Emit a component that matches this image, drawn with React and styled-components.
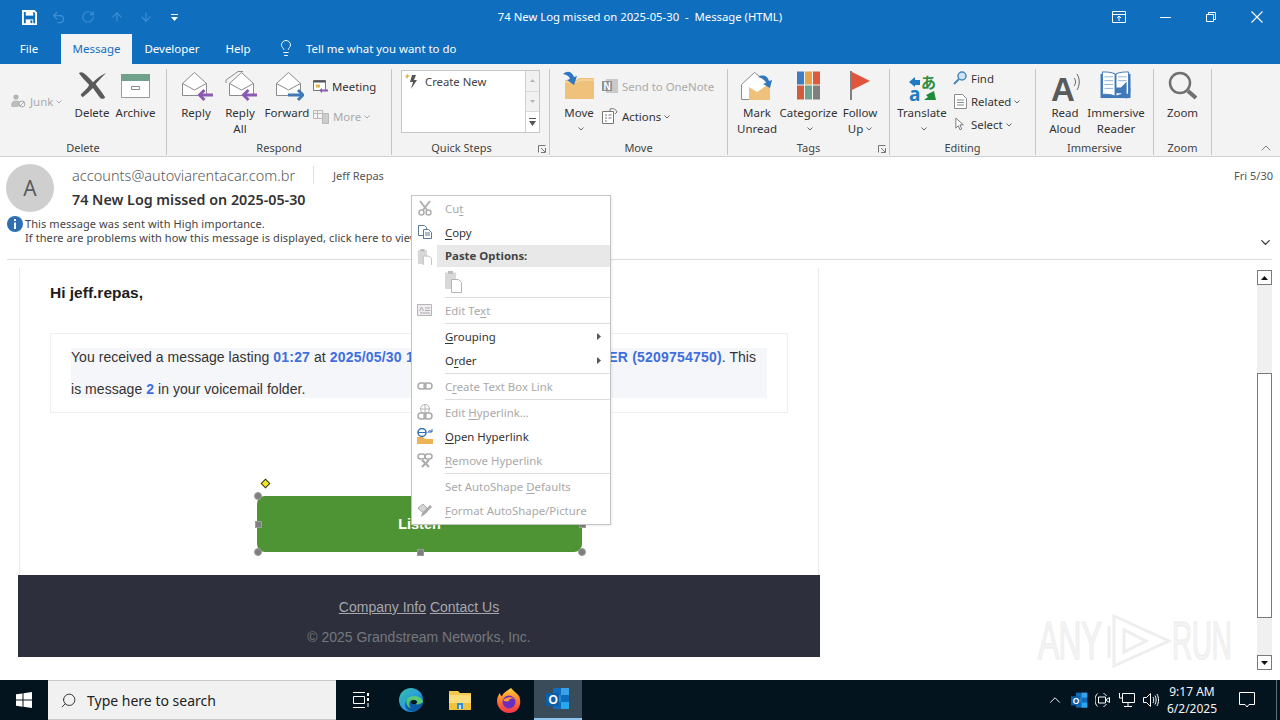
import React from 'react';
import styled, { createGlobalStyle } from 'styled-components';
import { Search, Undo2, RotateCw, ArrowUp, ArrowDown, Lightbulb, ChevronUp, ChevronDown } from 'lucide-react';

const UI_FONT = '"Noto Sans", "Open Sans", sans-serif';
const MAIL_FONT = '"Liberation Sans", Arial, sans-serif';

const GlobalStyle = createGlobalStyle`
  html, body { margin: 0; padding: 0; background: #fff; overflow: hidden; }
  * { box-sizing: border-box; }
`;

// --------------------- Window chrome ----------------------------------

const Page = styled.div`
  position: relative;
  width: 1280px;
  height: 720px;
  display: flex;
  flex-direction: column;
  overflow: hidden;
  font-family: ${UI_FONT};
  font-size: 12px;
  color: #333;
  background: #fff;
`;

const TitleBar = styled.div`
  height: 34px;
  flex: none;
  display: grid;
  grid-template-columns: 1fr auto 1fr;
  align-items: center;
  background: #106ebe;
  color: #fff;
`;

const Qat = styled.div`
  display: flex;
  align-items: center;
  padding-left: 15px;
`;

const QatSlot = styled.div`
  width: 29px;
  height: 20px;
  display: flex;
  align-items: center;
  justify-content: center;
  color: ${(p) => (p.$dim ? '#3f8ed2' : '#fff')};
`;

const WindowTitle = styled.div`
  font-size: 11.3px;
  line-height: 16px;
  color: #fff;
  white-space: pre;
`;

const WindowButtons = styled.div`
  justify-self: end;
  display: flex;
  align-items: center;
`;

const WindowButton = styled.div`
  width: 46px;
  height: 30px;
  display: flex;
  align-items: center;
  justify-content: center;
`;

const TabBar = styled.div`
  height: 30px;
  flex: none;
  display: flex;
  align-items: flex-end;
  background: #106ebe;
`;

const Tab = styled.div`
  width: ${(p) => p.$w}px;
  height: 30px;
  display: flex;
  align-items: center;
  justify-content: center;
  padding: 0 ${(p) => p.$pr || 0}px 2px 0;
  font-size: 11.5px;
  color: ${(p) => (p.$active ? '#106ebe' : '#fff')};
  background: ${(p) => (p.$active ? '#f3f3f3' : 'transparent')};
`;

const TellMe = styled.div`
  display: flex;
  align-items: center;
  gap: 11px;
  height: 30px;
  padding: 0 0 2px 13px;
  font-size: 11.4px;
  color: #fff;
`;

// --------------------- Ribbon -----------------------------------------

const Ribbon = styled.div`
  position: relative;
  height: 93px;
  flex: none;
  display: flex;
  background: #f3f3f3;
  border-bottom: 1px solid #d2d2d2;
`;

const Group = styled.div`
  width: ${(p) => p.$w}px;
  flex: none;
  height: 92px;
  display: flex;
  flex-direction: column;
  position: relative;
`;

const GroupDivider = styled.div`
  width: 1px;
  flex: none;
  margin: 5px 0 1px;
  background: #c6c6c6;
`;

const GroupBody = styled.div`
  height: 76px;
  display: flex;
  padding-left: ${(p) => p.$pad || 0}px;
`;

const GroupLabel = styled.div`
  height: 16px;
  line-height: 16px;
  text-align: center;
  font-size: 11px;
  color: #444;
  padding-right: ${(p) => p.$pr || 0}px;
`;

const Launcher = styled.svg`
  position: absolute;
  right: 3px;
  bottom: 3px;
`;

const LargeButton = styled.div`
  width: ${(p) => p.$w}px;
  flex: none;
  display: flex;
  flex-direction: column;
  align-items: center;
  text-align: center;
  color: #333;
`;

const LargeIcon = styled.div`
  height: 41px;
  padding-top: 7px;
  display: flex;
  justify-content: center;
`;

const LargeText = styled.div`
  font-size: 11.5px;
  line-height: 15.5px;
  white-space: pre-line;
`;

const SmallColumn = styled.div`
  display: flex;
  flex-direction: column;
  flex: none;
  width: ${(p) => p.$w}px;
  padding-top: ${(p) => p.$top}px;
  padding-left: ${(p) => p.$left || 0}px;
  gap: ${(p) => p.$gap}px;
`;

const SmallButton = styled.div`
  display: flex;
  align-items: center;
  height: 18px;
  gap: 4px;
  font-size: 11.4px;
  white-space: nowrap;
  color: ${(p) => (p.$off ? '#aaaaaa' : '#333')};
`;

const IconSlot = styled.span`
  width: 14px;
  display: flex;
  justify-content: center;
  flex: none;
`;

const CaretIcon = styled.svg`
  margin-left: 3px;
  vertical-align: middle;
`;

const Gallery = styled.div`
  width: 139px;
  height: 63px;
  margin: 6px 0 0 9px;
  display: flex;
  background: #fff;
  border: 1px solid #c6c6c6;
`;

const GalleryList = styled.div`
  flex: 1;
  display: flex;
  align-items: flex-start;
  gap: 2px;
  padding: 2px 0 0 3px;
  font-size: 11.3px;
  line-height: 17px;
  color: #444;
`;

const GalleryArrows = styled.div`
  width: 14px;
  display: flex;
  flex-direction: column;
  border-left: 1px solid #d0d0d0;
`;

const GalleryArrow = styled.div`
  flex: 1;
  display: flex;
  align-items: center;
  justify-content: center;
  background: ${(p) => (p.$on ? '#fff' : '#f1f1f1')};
  border-bottom: 1px solid #dadada;
  &:last-child { border-bottom: 0; }
`;

const Collapse = styled.div`
  position: absolute;
  right: 6px;
  bottom: 0;
  color: #444;
  display: flex;
`;

// --------------------- Message header ---------------------------------

const Header = styled.div`
  height: 103px;
  flex: none;
  margin: 0 8px 0 7px;
  border-bottom: 1px solid #dcdcdc;
  display: flex;
  flex-direction: column;
`;

const HeaderTop = styled.div`
  display: flex;
  height: 60px;
`;

const Avatar = styled.div`
  width: 48px;
  height: 48px;
  margin: 7px 0 0 -1px;
  border-radius: 50%;
  background: #cfcfcf;
  color: #5c5c5c;
  display: flex;
  align-items: center;
  justify-content: center;
  font-size: 21px;
`;

const HeaderText = styled.div`
  flex: 1;
  padding: 7px 0 0 18px;
  min-width: 0;
`;

const SenderRow = styled.div`
  display: flex;
  align-items: center;
  height: 22px;
`;

const Sender = styled.span`
  font-size: 14.5px;
  font-weight: 300;
  letter-spacing: 0.03px;
  color: #5a5a5a;
  width: 242px;
  border-right: 1px solid #e0e0e0;
  line-height: 18px;
`;

const Recipient = styled.span`
  margin: 1px 0 0 19px;
  font-size: 11px;
  color: #555;
`;

const SentDate = styled.span`
  margin: 1px -1px 0 auto;
  font-size: 11px;
  color: #555;
`;

const Subject = styled.div`
  margin-top: 4px;
  font-size: 14.3px;
  line-height: 20px;
  font-weight: 600;
  color: #333;
`;

const InfoRow = styled.div`
  display: flex;
  gap: 2px;
  font-size: 11px;
  letter-spacing: 0.09px;
  line-height: 14px;
  color: #444;
  white-space: nowrap;
`;

const InfoGlyph = styled.svg`
  flex: none;
  margin-top: -1px;
`;

const ExpandChevron = styled.div`
  margin: 18px -1px 0 auto;
  display: flex;
  color: #333;
`;

// --------------------- Mail body --------------------------------------

const Body = styled.div`
  flex: 1;
  display: flex;
  min-height: 0;
`;

const MailPane = styled.div`
  flex: 1;
  padding: 8px 0 0 18px;
`;

const MailColumn = styled.div`
  width: 802px;
  font-family: ${MAIL_FONT};
`;

const Sheet = styled.div`
  height: 307px;
  margin: 0 1px;
  padding: 15px 30px;
  border-left: 1px solid #e9e9e9;
  border-right: 1px solid #e9e9e9;
`;

const Greeting = styled.div`
  font-size: 15.5px;
  line-height: 20px;
  font-weight: 700;
  color: #1c1c1c;
`;

const NoticeBox = styled.div`
  width: 738px;
  height: 80px;
  margin-top: 30px;
  padding: 14px 20px;
  border: 1px solid #efefef;
`;

const NoticeShade = styled.div`
  display: flow-root;
  height: 50px;
  background: #f5f6fa;
`;

const NoticeText = styled.div`
  margin-top: -7px;
  font-size: 14px;
  line-height: 32px;
  letter-spacing: 0.04px;
  color: #333;
`;

const Strong = styled.b`
  color: #3f6fdc;
  font-weight: 700;
  letter-spacing: 0.2px;
`;

const ListenRow = styled.div`
  display: flex;
  margin: 83px 0 0 207px;
`;

const Listen = styled.div`
  position: relative;
  width: 325px;
  height: 56px;
  border-radius: 8px;
  background: #4f9434;
  color: #fff;
  font-size: 14.5px;
  font-weight: 700;
  display: flex;
  align-items: center;
  justify-content: center;
`;

const Handle = styled.span`
  position: absolute;
  left: ${(p) => p.$x}px;
  top: ${(p) => p.$y}px;
  width: ${(p) => (p.$round ? 8 : 7)}px;
  height: ${(p) => (p.$round ? 8 : 7)}px;
  margin: ${(p) => (p.$round ? -4 : -3.5)}px;
  border-radius: ${(p) => (p.$round ? '50%' : '0')};
  background: #7f7f7f;
  border: 1px solid #9b9b9b;
`;

const Diamond = styled.span`
  position: absolute;
  left: 5px;
  top: -16px;
  width: 7px;
  height: 7px;
  transform: rotate(45deg);
  background: #f3ea1c;
  border: 1px solid #333;
`;

const MailFooter = styled.div`
  height: 82px;
  background: #2d303c;
  text-align: center;
  font-size: 14px;
  line-height: 20px;
  padding-top: 22px;
  color: #75777f;
`;

const FooterLinks = styled.div`
  margin-bottom: 10px;
  color: #a5a7ad;
  & > span { text-decoration: underline; }
`;

const ScrollTrack = styled.div`
  width: 15px;
  margin: 10px 8px 10px 0;
  flex: none;
  display: flex;
  flex-direction: column;
  background: #f0f0f0;
`;

const ScrollButton = styled.div`
  height: 15px;
  flex: none;
  background: #fff;
  border: 1px solid #7a7a7a;
  display: flex;
  align-items: center;
  justify-content: center;
`;

const ScrollThumb = styled.div`
  height: 245px;
  margin-top: 88px;
  margin-bottom: auto;
  background: #fff;
  border: 1px solid #7a7a7a;
`;

// --------------------- Context menu -----------------------------------

const Menu = styled.div`
  position: absolute;
  left: 411px;
  top: 195px;
  width: 200px;
  background: #fff;
  border: 1px solid #c4c4c4;
  padding-bottom: 2px;
  box-shadow: 1px 1px 2px rgba(0, 0, 0, 0.08);
  font-size: 11.4px;
`;

const MenuItem = styled.div`
  height: 24px;
  display: flex;
  align-items: center;
  color: ${(p) => (p.$off ? '#a9a9a9' : '#333')};
  u { text-underline-offset: 2px; }
`;

const MenuGlyph = styled.div`
  width: 25px;
  height: 24px;
  flex: none;
  display: flex;
  align-items: center;
  justify-content: center;
`;

const MenuLabel = styled.div`
  padding-left: 8px;
  white-space: pre;
`;

const MenuHeading = styled.div`
  flex: 1;
  height: 22px;
  line-height: 22px;
  padding-left: 8px;
  background: #e8e8e8;
  font-weight: 700;
  color: #444;
`;

const PasteRow = styled.div`
  height: 28px;
  display: flex;
  align-items: center;
  padding-left: 32px;
`;

const MenuRule = styled.div`
  height: 2px;
  margin-left: 33px;
  border-bottom: 1px solid #dcdcdc;
`;

const Submenu = styled.svg`
  margin: 0 9px 0 auto;
`;

// --------------------- Taskbar ----------------------------------------

const Taskbar = styled.div`
  height: 40px;
  flex: none;
  display: flex;
  align-items: center;
  background: #04141f;
  color: #fff;
`;

const StartSlot = styled.div`
  width: 48px;
  height: 40px;
  display: flex;
  align-items: center;
  justify-content: center;
`;

const SearchBox = styled.div`
  width: 288px;
  height: 40px;
  display: flex;
  align-items: center;
  gap: 10px;
  padding-left: 12px;
  background: #f1f1f1;
  border: 1px solid #c9c9c9;
  border-width: 1px 0;
  color: #222;
  font-size: 14px;
`;

const SearchGlyph = styled(Search)`
  transform: scaleX(-1);
`;

const TaskApps = styled.div`
  display: flex;
`;

const TaskApp = styled.div`
  width: ${(p) => p.$w}px;
  height: 40px;
  display: flex;
  align-items: center;
  justify-content: center;
  background: ${(p) => (p.$active ? '#3a4b59' : 'transparent')};
  border-bottom: ${(p) => (p.$active ? '2px solid #8fc4ee' : '0')};
`;

const Tray = styled.div`
  margin-left: auto;
  display: flex;
  align-items: center;
  height: 40px;
`;

const TrayIcon = styled.div`
  width: 24px;
  height: 40px;
  display: flex;
  align-items: center;
  justify-content: center;
`;

const Clock = styled.div`
  width: 58px;
  text-align: center;
  font-size: 12px;
  line-height: 17.5px;
  color: #f3f3f3;
`;

const Notify = styled.div`
  width: 40px;
  margin: 0 12px 0 3px;
  display: flex;
  justify-content: center;
  padding-left: 6px;
`;

const ShowDesktop = styled.div`
  width: 1px;
  height: 40px;
  background: #5f6b75;
  margin-right: 3px;
`;

// --------------------- Watermark --------------------------------------

const Watermark = styled.div`
  position: absolute;
  left: 1038px;
  top: 606px;
  display: flex;
  align-items: center;
  height: 68px;
  pointer-events: none;
  font-family: ${MAIL_FONT};
  font-size: 53px;
  letter-spacing: -1px;
  color: #f4f4f4;
  -webkit-text-stroke: 1px #ebebeb;
`;

const WatermarkWord = styled.span`
  display: inline-block;
  transform: scaleX(${(p) => p.$sx});
  transform-origin: left center;
  width: ${(p) => p.$w}px;
`;

// --------------------- Icons ------------------------------------------

const Caret = ({ color = '#666' }) => (
  <CaretIcon width="6" height="4" viewBox="0 0 6 4">
    <path d="M.5.5 3 3 5.500.5" fill="none" stroke={color} />
  </CaretIcon>
);

const SaveIcon = () => (
  <svg width="15" height="15" viewBox="0 0 16 16">
    <path d="M1 1h12l2 2v12H1z" fill="none" stroke="#fff" strokeWidth="2" />
    <path d="M4 1h8v5H4z" fill="#fff" />
    <path d="M4 10h8v5H4z" fill="#fff" />
    <path d="M9 11h2v3H9z" fill="#106ebe" />
  </svg>
);

const CustomizeIcon = () => (
  <svg width="7" height="7" viewBox="0 0 7 7">
    <path d="M0 0h7v1H0z M0 3h7L3.500 7z" fill="#fff" />
  </svg>
);

const RibbonDisplayIcon = () => (
  <svg width="14" height="12" viewBox="0 0 14 12" fill="none" stroke="#fff">
    <path d="M.5.5h13v11H.5zM.5 3.500h13" />
    <path d="M7 10V5M5 7l2-2 2 2" />
  </svg>
);

const MinimizeIcon = () => (
  <svg width="11" height="3" viewBox="0 0 11 3">
    <path d="M0 1.500h11" stroke="#fff" />
  </svg>
);

const RestoreIcon = () => (
  <svg width="10" height="10" viewBox="0 0 10 10" fill="none" stroke="#fff">
    <path d="M.5 2.500h7v7h-7zM2.500 2.500v-2h7v7h-2" />
  </svg>
);

const CloseIcon = () => (
  <svg width="12" height="12" viewBox="0 0 12 12" fill="none" stroke="#fff" strokeWidth="1.100">
    <path d="M.5.5l11 11M11.500.5l-11 11" />
  </svg>
);

const JunkIcon = () => (
  <svg width="15" height="14" viewBox="0 0 15 14">
    <circle cx="5" cy="3" r="2.600" fill="#b5b5b5" />
    <path d="M0 12c0-4 2-5.500 5-5.500s4 1 4.500 2L7 13H1z" fill="#bdbdbd" />
    <circle cx="11" cy="10" r="3" fill="#f3f3f3" stroke="#a5a5a5" />
    <path d="m9 12 4-4" stroke="#a5a5a5" />
  </svg>
);

const DeleteIcon = () => (
  <svg width="30" height="30" viewBox="0 0 32 32">
    <path d="M2 2c2-1 3-1 5 0 4 3 8 7 10 10 4-4 8-7 14-10-4 4-9 9-11 12 3 4 7 9 10 14-1 2-3 2-5 1-3-4-6-8-8-11-3 3-7 7-11 10-1-1-2-2-2-3 3-3 7-6 9-10C10 11 5 7 2 2z" fill="#5a5a5a" />
  </svg>
);

const ArchiveIcon = () => (
  <svg width="32" height="27" viewBox="0 -3 32 27">
    <path d="M1.500 5.500h28v18h-28z" fill="#fff" stroke="#9a9a9a" />
    <path d="M1 0h29v7H1z" fill="#70a18c" />
    <path d="M11.500 12.500h8v3h-8z" fill="none" stroke="#888" />
  </svg>
);

const Envelope = ({ dx = 0 }) => (
  <g transform={`translate(${dx} 0)`} fill="#fff" stroke="#8b8b8b">
    <path d="M1.500 12.500 13.500 1.500l12 11v12h-24z" />
    <path d="M1.500 12.500 13.500 19l12-6.500" fill="none" />
  </g>
);

const ReplyIcon = ({ all }) => (
  <svg width="33" height="31" viewBox="0 0 33 31">
    {all && <path d="M2 12V9L14 .5h5" stroke="#8b8b8b" fill="none" />}
    <Envelope dx={all ? 4 : 1} />
    <g fill="none" stroke="#8a5bb2" strokeWidth="3">
      <path d="M33 24H20" />
      <path d="M24.500 19l-5 5 5 5" />
    </g>
  </svg>
);

const ForwardIcon = () => (
  <svg width="33" height="31" viewBox="0 0 33 31">
    <Envelope dx={4} />
    <g fill="none" stroke="#3f79b8" strokeWidth="3">
      <path d="M17 24h14" />
      <path d="M27 19l5 5-5 5" />
    </g>
  </svg>
);

const MeetingIcon = () => (
  <svg width="15" height="14" viewBox="0 0 15 14">
    <path d="M.5 1.500h12v10H.5z" fill="#fff" stroke="#777" />
    <path d="M.5 1.500h12v2H.5z" fill="#555" />
    <path d="M3 5.500h4v3H3z" fill="#e8b23e" />
    <path d="M15 10.500H9V9l-3 2.500L9 14v-1.500h6z" fill="#8a5bb2" />
  </svg>
);

const MoreIcon = () => (
  <svg width="16" height="15" viewBox="0 0 16 15" fill="none" stroke="#b8b8b8">
    <path d="M.5 1.500h9v8h-9zM.5 4.500h9M4.500 1.500v8" />
    <path d="M9.500 4.500h6v10h-6z" fill="#ccc" />
  </svg>
);

const BoltIcon = () => (
  <svg width="18" height="17" viewBox="0 0 18 17">
    <path d="M2 0l1 2 2 1-2 1-1 2-1-2-1-1 2-1z" fill="#e8b23e" />
    <path d="M11 2H7L5 9h3l-2 7 6-9H9z" fill="#555" />
  </svg>
);

const MoveIcon = () => (
  <svg width="32" height="30" viewBox="0 0 32 30">
    <path d="M2 9h11l3-2h15v21H2z" fill="#eec27a" />
    <path d="M2 11h12l3-2h14" fill="none" stroke="#f6dfb3" />
    <path d="M0 3c5-4 9-2 11 3l3-1-3 9-7-5 3-1C6 5 4 4 0 3z" fill="#2f77bf" />
  </svg>
);

const OneNoteIcon = () => (
  <svg width="16" height="16" viewBox="0 0 16 16">
    <path d="M4 1h12v14H4z" fill="#c9c9c9" />
    <path d="M0 3h10v10H0z" fill="#8f8f8f" />
    <text x="1.500" y="11.500" fontSize="10" fontWeight="700" fill="#fff" fontFamily="Liberation Sans">N</text>
  </svg>
);

const ActionsIcon = () => (
  <svg width="16" height="16" viewBox="0 0 16 16" fill="none" stroke="#777">
    <path d="M.5 3.500h11v12H.5z" fill="#fff" />
    <path d="M3 7h2M6.500 7h3M3 10h2M6.500 10h3M3 13h2" />
    <path d="M8 3.500V1c3-1 6 0 7 3l-2 2" />
  </svg>
);

const UnreadIcon = () => (
  <svg width="34" height="30" viewBox="0 0 34 30">
    <path d="M1.500 13.500 14.500 1.500l13 10v17h-26z" fill="#fff" stroke="#8b8b8b" />
    <path d="M9 16l8 5 13-9v17H9z" fill="#eec27a" />
    <path d="M18 6c5-3 10-1 11 4l3-1-2 8-7-4 3-1c-1-4-4-5-8-6z" fill="#2f77bf" />
  </svg>
);

const CategorizeIcon = () => (
  <svg width="24" height="29" viewBox="0 0 24 28">
    <path d="M0 0h7v13H0z" fill="#3f7cc0" />
    <path d="M8 0h7v13H8z" fill="#e8a24b" />
    <path d="M16 0h7v13h-7z" fill="#de5a3d" />
    <path d="M0 14h7v14H0z" fill="#cf5c3f" />
    <path d="M8 14h7v14H8z" fill="#6fa190" />
    <path d="M16 14h7v14h-7z" fill="#7f7f7f" />
  </svg>
);

const FlagIcon = () => (
  <svg width="22" height="29" viewBox="0 0 22 29">
    <path d="M1 0h2v29H1z" fill="#808080" />
    <path d="M3 1l18 9-18 9z" fill="#e0563c" />
  </svg>
);

const LauncherIcon = () => (
  <Launcher width="8" height="8" viewBox="0 0 8 8" fill="none" stroke="#777">
    <path d="M.5 7.500v-7h7M7.500 3v4.500H3M3 3l4 4" />
  </Launcher>
);

const TranslateIcon = () => (
  <svg width="30" height="37" viewBox="0 0 30 37">
    <text x="14" y="17" fontSize="15" fontWeight="700" fill="#2e8b3d" fontFamily="Noto Sans CJK JP">あ</text>
    <text x="2" y="30" fontSize="19" fontWeight="700" fill="#1f7ac4" fontFamily="Noto Sans">a</text>
    <path d="M2 11l6-5v3h5v5H8v2z" fill="#1f7ac4" />
    <path d="M29 29H17l4-3-2-2 8-4 2 9z" fill="#1f8a3a" />
  </svg>
);

const FindIcon = () => (
  <svg width="14" height="14" viewBox="0 0 14 14">
    <circle cx="9" cy="5" r="4" fill="#cfe3f3" stroke="#4a86bd" strokeWidth="1.500" />
    <path d="M6 8 1 13" stroke="#4a86bd" strokeWidth="2" />
  </svg>
);

const RelatedIcon = () => (
  <svg width="13" height="15" viewBox="0 0 13 15" fill="#fff" stroke="#8a8a8a">
    <path d="M.5 .5h8l4 4v10H.5z" />
    <path d="M3 6h7M3 8.500h7M3 11h7" fill="none" />
  </svg>
);

const SelectIcon = () => (
  <svg width="10" height="16" viewBox="0 0 12 16">
    <path d="M1 1v12l3-3 2 5 2-1-2-5h4z" fill="#fff" stroke="#666" />
  </svg>
);

const ReadAloudIcon = () => (
  <svg width="30" height="38" viewBox="0 0 30 38">
    <text x="1" y="30" fontSize="33" fontWeight="700" fill="#5a5a5a" fontFamily="Liberation Sans">A</text>
    <path d="M24 7c2 2 2 6 0 8M27 3c3 5 3 11 0 16" fill="none" stroke="#666" />
  </svg>
);

const ImmersiveIcon = () => (
  <svg width="34" height="29" viewBox="0 0 34 30">
    <path d="M1 3h31v25H1z" fill="#3f79b8" />
    <path d="M3 1c4 0 9 0 13 2v23c-4-2-9-2-13-2zM30 1c-4 0-9 0-13 2v23c4-2 9-2 13-2z" fill="#fff" stroke="#3f79b8" />
    <path d="M5 6h9M5 10h9M5 14h9M5 18h9M19 6h9M19 10h9" stroke="#8fb0d3" />
    <path d="M17 17h5l6-6v18l-6-6h-5z" fill="#3f79b8" />
    <path d="M30 14c2 3 2 8 0 11" stroke="#3f79b8" fill="none" />
  </svg>
);

const ZoomIcon = () => (
  <svg width="30" height="30" viewBox="0 0 30 30" fill="none" stroke="#707070">
    <circle cx="12" cy="12" r="10" strokeWidth="2.500" />
    <path d="m20 20 8 7" strokeWidth="4" />
  </svg>
);

const InfoIcon = () => (
  <InfoGlyph width="16" height="16" viewBox="0 0 16 16">
    <circle cx="8" cy="8" r="8" fill="#2d6fb2" />
    <path d="M7 3h2v2H7zM7 6.500h2V13H7z" fill="#fff" />
  </InfoGlyph>
);

const Tri = ({ up }) => (
  <svg width="7" height="4" viewBox="0 0 7 4">
    <path d={up ? 'M0 4h7L3.500 0z' : 'M0 0h7L3.500 4z'} fill="#111" />
  </svg>
);

const GrayTri = ({ up }) => (
  <svg width="5" height="3" viewBox="0 0 5 3">
    <path d={up ? 'M0 3h5L2.500 0z' : 'M0 0h5L2.500 3z'} fill="#b5b5b5" />
  </svg>
);

const GalleryMoreIcon = () => (
  <svg width="7" height="8" viewBox="0 0 7 8">
    <path d="M0 0h7v1H0zM0 3h7L3.500 8z" fill="#555" />
  </svg>
);

const MenuIcon = ({ children, w = 16, h = 16, vb }) => (
  <svg width={w} height={h} viewBox={vb || `0 0 ${w} ${h}`}>{children}</svg>
);

const ClipboardShape = () => (
  <>
    <path d="M1 2.500h11V19H1z" fill="#d8d8d8" />
    <path d="M4 1h5v3H4z" fill="#bcbcbc" />
    <path d="M7.500 9.500h7l3 3v10h-10z" fill="#fff" stroke="#b5b5b5" />
  </>
);

const WindowsLogo = () => (
  <svg width="16" height="16" viewBox="0 0 16 16">
    <path d="M0 2.300 6.500 1.400v6.200H0zM7.500 1.300 16 0v7.600H7.500zM0 8.500h6.500v6.200L0 13.800zM7.500 8.500H16V16l-8.500-1.200z" fill="#fff" />
  </svg>
);

const TaskViewIcon = () => (
  <svg width="16" height="16" viewBox="0 0 16 16" fill="none" stroke="#fff">
    <path d="M0 .5h12M0 15.500h12M.5 4.500h11v7H.5z" />
    <path d="M14 1h2v3h-2zM14 6h2v3h-2z" fill="#fff" stroke="none" />
    <path d="M15 11v4" />
  </svg>
);

const EdgeIcon = () => (
  <svg width="24" height="24" viewBox="0 0 24 24">
    <defs>
      <linearGradient id="edgeA" x1="0" y1="0" x2="1" y2="1">
        <stop offset="0" stopColor="#35c1a0" />
        <stop offset="0.5" stopColor="#2a9fdc" />
        <stop offset="1" stopColor="#0f5ea8" />
      </linearGradient>
    </defs>
    <circle cx="12" cy="12" r="12" fill="url(#edgeA)" />
    <path d="M13 23C6 23 4 15 9 11c3-2 8-1 8 3h7c0 4-4 9-11 9z" fill="#0c59a4" />
    <path d="M24 14c-2 2-5 3-8 2 2-2 1-4-2-4-4 0-5 5-2 8-5-1-6-7-3-10 5-3 14-2 15 4z" fill="#5ed36b" opacity="0.9" />
    <ellipse cx="15" cy="14" rx="3" ry="2" fill="#04141f" />
  </svg>
);

const ExplorerIcon = () => (
  <svg width="22" height="22" viewBox="0 0 22 22">
    <path d="M0 2h9l2 2h11v17H0z" fill="#f4c84a" />
    <path d="M0 6h22v15H0z" fill="#fbdc7b" />
    <path d="M0 14h22v7H0z" fill="#f2c23d" />
    <path d="M8 14h6v6H8z" fill="#2f8fd6" />
    <path d="M10 16h2v4h-2z" fill="#bfe3fb" />
  </svg>
);

const FirefoxIcon = () => (
  <svg width="24" height="25" viewBox="0 0 24 25">
    <defs>
      <linearGradient id="foxA" x1="0" y1="0" x2="0" y2="1">
        <stop offset="0" stopColor="#ffd43d" />
        <stop offset="0.5" stopColor="#ff7a30" />
        <stop offset="1" stopColor="#f0324f" />
      </linearGradient>
    </defs>
    <path d="M14 0c2 3 6 5 8 8 3 6 1 17-10 17C4 25 0 18 0 13 0 9 2 6 3 5c0 2 1 3 2 3 1-3 5-5 9-8z" fill="url(#foxA)" />
    <circle cx="12" cy="14" r="6.500" fill="#6b2fc0" />
    <path d="M6 12c3-3 9-4 11-1-3-1-5 0-5 2-3 1-5 0-6-1z" fill="#ff9a3c" />
  </svg>
);

const OutlookIcon = ({ size = 24 }) => (
  <svg width={size} height={size} viewBox="0 0 24 24">
    <path d="M7 1h16v21H7z" fill="#0f6cbd" />
    <path d="M15 1h8v7h-8z" fill="#3aa0e8" />
    <path d="M7 8h8v7H7z" fill="#1f8ad8" />
    <path d="M15 15h8v7h-8z" fill="#28a8ea" />
    <path d="M0 6h13v13H0z" fill="#0c5ea8" />
    <text x="2.500" y="16.500" fontSize="12" fontWeight="700" fill="#fff" fontFamily="Liberation Sans">O</text>
  </svg>
);

const MeetIcon = () => (
  <svg width="16" height="16" viewBox="0 0 16 16" fill="none" stroke="#fff">
    <path d="M2.500 1.500C1 3 0 5 0 8s1 5 2.500 6.500M8.500 1.500C10 2 11 3 11.500 4M11.500 12c-.5 1-1.500 2-3 2.500" />
    <path d="M3.500 5h7v6h-7zM10.500 8l4-2.500v5z" />
  </svg>
);

const NetworkIcon = () => (
  <svg width="16" height="16" viewBox="0 0 16 16" fill="none" stroke="#fff">
    <path d="M3.500 1.500h12v9h-12z" />
    <path d="M9 10.500V14M5 14.500h8M.5 1v5h3" />
  </svg>
);

const VolumeIcon = () => (
  <svg width="17" height="16" viewBox="0 0 17 16" fill="none" stroke="#fff">
    <path d="M.5 5.500h3l4-4v13l-4-4h-3z" />
    <path d="M10 5c1 2 1 4 0 6M12 3.500c1.500 3 1.500 6 0 9M14 2c2 4 2 8 0 12" />
  </svg>
);

const NotifyIcon = () => (
  <svg width="16" height="16" viewBox="0 0 16 16" fill="none" stroke="#fff">
    <path d="M.5 .5h15v12H10L8 15l-2-2.500H.5z" />
  </svg>
);

// --------------------- Page -------------------------------------------

const Large = ({ w, icon, text, caret }) => (
  <LargeButton $w={w}>
    <LargeIcon>{icon}</LargeIcon>
    <LargeText>
      {text}
      {caret && <Caret />}
    </LargeText>
  </LargeButton>
);

const Item = ({ icon, off, children, arrow }) => (
  <MenuItem $off={off}>
    <MenuGlyph>{icon}</MenuGlyph>
    <MenuLabel>{children}</MenuLabel>
    {arrow && (
      <Submenu width="4" height="7" viewBox="0 0 4 7">
        <path d="M0 0l4 3.500L0 7z" fill="#555" />
      </Submenu>
    )}
  </MenuItem>
);

const App = () => (
  <Page>
    <GlobalStyle />
    <TitleBar>
      <Qat>
        <QatSlot><SaveIcon /></QatSlot>
        <QatSlot $dim><Undo2 size={15} /></QatSlot>
        <QatSlot $dim><RotateCw size={14} /></QatSlot>
        <QatSlot $dim><ArrowUp size={14} /></QatSlot>
        <QatSlot $dim><ArrowDown size={14} /></QatSlot>
        <QatSlot><CustomizeIcon /></QatSlot>
      </Qat>
      <WindowTitle>74 New Log missed on 2025-05-30  -  Message (HTML)</WindowTitle>
      <WindowButtons>
        <WindowButton><RibbonDisplayIcon /></WindowButton>
        <WindowButton><MinimizeIcon /></WindowButton>
        <WindowButton><RestoreIcon /></WindowButton>
        <WindowButton><CloseIcon /></WindowButton>
      </WindowButtons>
    </TitleBar>
    <TabBar>
      <Tab $w={61} $pr={3}>File</Tab>
      <Tab $w={71} $active>Message</Tab>
      <Tab $w={80}>Developer</Tab>
      <Tab $w={52}>Help</Tab>
      <TellMe>
        <Lightbulb size={18} strokeWidth={1.25} />
        Tell me what you want to do
      </TellMe>
    </TabBar>

    <Ribbon>
      <Group $w={166}>
        <GroupBody $pad={11}>
          <SmallColumn $w={61} $top={28} $gap={0}>
            <SmallButton $off>
              <JunkIcon />
              <span>Junk<Caret color="#aaa" /></span>
            </SmallButton>
          </SmallColumn>
          <Large w={40} icon={<DeleteIcon />} text="Delete" />
          <Large w={47} icon={<ArchiveIcon />} text="Archive" />
        </GroupBody>
        <GroupLabel>Delete</GroupLabel>
      </Group>
      <GroupDivider />

      <Group $w={224}>
        <GroupBody $pad={7}>
          <Large w={44} icon={<ReplyIcon />} text="Reply" />
          <Large w={44} icon={<ReplyIcon all />} text={'Reply\nAll'} />
          <Large w={50} icon={<ForwardIcon />} text="Forward" />
          <SmallColumn $w={78} $top={13} $gap={12} $left={1}>
            <SmallButton><MeetingIcon /><span>Meeting</span></SmallButton>
            <SmallButton $off><MoreIcon /><span>More<Caret color="#aaa" /></span></SmallButton>
          </SmallColumn>
        </GroupBody>
        <GroupLabel>Respond</GroupLabel>
      </Group>
      <GroupDivider />

      <Group $w={157}>
        <GroupBody>
          <Gallery>
            <GalleryList><BoltIcon />Create New</GalleryList>
            <GalleryArrows>
              <GalleryArrow><GrayTri up /></GalleryArrow>
              <GalleryArrow><GrayTri /></GalleryArrow>
              <GalleryArrow $on><GalleryMoreIcon /></GalleryArrow>
            </GalleryArrows>
          </Gallery>
        </GroupBody>
        <GroupLabel $pr={18}>Quick Steps</GroupLabel>
        <LauncherIcon />
      </Group>
      <GroupDivider />

      <Group $w={177}>
        <GroupBody $pad={7}>
          <Large w={44} icon={<MoveIcon />} text={'Move\n'} caret />
          <SmallColumn $w={125} $top={13} $gap={12} $left={1}>
            <SmallButton $off><OneNoteIcon /><span>Send to OneNote</span></SmallButton>
            <SmallButton><ActionsIcon /><span>Actions<Caret /></span></SmallButton>
          </SmallColumn>
        </GroupBody>
        <GroupLabel>Move</GroupLabel>
      </Group>
      <GroupDivider />

      <Group $w={161}>
        <GroupBody $pad={5}>
          <Large w={48} icon={<UnreadIcon />} text={'Mark\nUnread'} />
          <Large w={55} icon={<CategorizeIcon />} text={'Categorize\n'} caret />
          <Large w={48} icon={<FlagIcon />} text={'Follow\nUp'} caret />
        </GroupBody>
        <GroupLabel>Tags</GroupLabel>
        <LauncherIcon />
      </Group>
      <GroupDivider />

      <Group $w={145}>
        <GroupBody $pad={6}>
          <Large w={52} icon={<TranslateIcon />} text={'Translate\n'} caret />
          <SmallColumn $w={80} $top={5} $gap={5} $left={5}>
            <SmallButton><IconSlot><FindIcon /></IconSlot><span>Find</span></SmallButton>
            <SmallButton><IconSlot><RelatedIcon /></IconSlot><span>Related<Caret /></span></SmallButton>
            <SmallButton><IconSlot><SelectIcon /></IconSlot><span>Select<Caret /></span></SmallButton>
          </SmallColumn>
        </GroupBody>
        <GroupLabel>Editing</GroupLabel>
      </Group>
      <GroupDivider />

      <Group $w={117}>
        <GroupBody $pad={6}>
          <Large w={46} icon={<ReadAloudIcon />} text={'Read\nAloud'} />
          <Large w={56} icon={<ImmersiveIcon />} text={'Immersive\nReader'} />
        </GroupBody>
        <GroupLabel>Immersive</GroupLabel>
      </Group>
      <GroupDivider />

      <Group $w={57}>
        <GroupBody>
          <Large w={57} icon={<ZoomIcon />} text="Zoom" />
        </GroupBody>
        <GroupLabel>Zoom</GroupLabel>
      </Group>
      <GroupDivider />
      <Collapse><ChevronUp size={16} strokeWidth={1} /></Collapse>
    </Ribbon>

    <Header>
      <HeaderTop>
        <Avatar>A</Avatar>
        <HeaderText>
          <SenderRow>
            <Sender>accounts@autoviarentacar.com.br</Sender>
            <Recipient>Jeff Repas</Recipient>
            <SentDate>Fri 5/30</SentDate>
          </SenderRow>
          <Subject>74 New Log missed on 2025-05-30</Subject>
        </HeaderText>
      </HeaderTop>
      <InfoRow>
        <InfoIcon />
        <div>
          This message was sent with High importance.
          <br />
          If there are problems with how this message is displayed, click here to view it in a web browser.
        </div>
        <ExpandChevron><ChevronDown size={15} strokeWidth={2} /></ExpandChevron>
      </InfoRow>
    </Header>

    <Body>
      <MailPane>
        <MailColumn>
          <Sheet>
            <Greeting>Hi jeff.repas,</Greeting>
            <NoticeBox>
              <NoticeShade>
                <NoticeText>
                  You received a message lasting <Strong>01:27</Strong> at{' '}
                  <Strong>2025/05/30 10:41</Strong> from <Strong>JEFF REPAS CALLER (5209754750)</Strong>. This
                  is message <Strong>2</Strong> in your voicemail folder.
                </NoticeText>
              </NoticeShade>
            </NoticeBox>
            <ListenRow>
              <Listen>
                Listen
                <Diamond />
                <Handle $round $x={1} $y={0} />
                <Handle $x={163} $y={0} />
                <Handle $round $x={325} $y={0} />
                <Handle $x={1} $y={28} />
                <Handle $x={325} $y={28} />
                <Handle $round $x={1} $y={56} />
                <Handle $x={163} $y={56} />
                <Handle $round $x={325} $y={56} />
              </Listen>
            </ListenRow>
          </Sheet>
          <MailFooter>
            <FooterLinks><span>Company Info</span> <span>Contact Us</span></FooterLinks>
            © 2025 Grandstream Networks, Inc.
          </MailFooter>
        </MailColumn>
      </MailPane>
      <ScrollTrack>
        <ScrollButton><Tri up /></ScrollButton>
        <ScrollThumb />
        <ScrollButton><Tri /></ScrollButton>
      </ScrollTrack>
    </Body>

    <Taskbar>
      <StartSlot><WindowsLogo /></StartSlot>
      <SearchBox>
        <SearchGlyph size={17} strokeWidth={1.25} />
        Type here to search
      </SearchBox>
      <TaskApps>
        <TaskApp $w={49}><TaskViewIcon /></TaskApp>
        <TaskApp $w={51}><EdgeIcon /></TaskApp>
        <TaskApp $w={47}><ExplorerIcon /></TaskApp>
        <TaskApp $w={51}><FirefoxIcon /></TaskApp>
        <TaskApp $active $w={48}><OutlookIcon /></TaskApp>
      </TaskApps>
      <Tray>
        <TrayIcon><ChevronUp size={18} strokeWidth={1.25} /></TrayIcon>
        <TrayIcon><OutlookIcon size={17} /></TrayIcon>
        <TrayIcon><MeetIcon /></TrayIcon>
        <TrayIcon><NetworkIcon /></TrayIcon>
        <TrayIcon><VolumeIcon /></TrayIcon>
        <Clock>9:17 AM<br />6/2/2025</Clock>
        <Notify><NotifyIcon /></Notify>
        <ShowDesktop />
      </Tray>
    </Taskbar>

    <Menu>
      <Item off icon={<MenuIcon><path d="M3 1l7 9M13 1 6 10" stroke="#b0b0b0" strokeWidth="2" /><circle cx="4.500" cy="12.500" r="2.500" fill="none" stroke="#b0b0b0" strokeWidth="1.500" /><circle cx="11.500" cy="12.500" r="2.500" fill="none" stroke="#b0b0b0" strokeWidth="1.500" /></MenuIcon>}>Cu<u>t</u></Item>
      <Item icon={<MenuIcon><path d="M1.500 1.500h6l2 2v8h-8z" fill="#fff" stroke="#5b7a9a" /><path d="M6.500 5.500h5l3 3v6h-8z" fill="#fff" stroke="#5b7a9a" /><path d="M8 9h5M8 11h5" stroke="#5b7a9a" /></MenuIcon>}><u>C</u>opy</Item>
      <MenuItem>
        <MenuGlyph><MenuIcon w={15} h={17} vb="0 0 18 20"><ClipboardShape /></MenuIcon></MenuGlyph>
        <MenuHeading>Paste Options:</MenuHeading>
      </MenuItem>
      <PasteRow><MenuIcon w={20} h={24}><ClipboardShape /></MenuIcon></PasteRow>
      <MenuRule />
      <Item off icon={<MenuIcon><path d="M.5 2.500h14v11H.5z" fill="#eeeeee" stroke="#b5b5b5" /><path d="M8 6h5M8 8.500h5M3 11h10M2.500 9 4.500 5l2 4" fill="none" stroke="#b5a5b5" /></MenuIcon>}>Edit Te<u>x</u>t</Item>
      <MenuRule />
      <Item arrow><u>G</u>rouping</Item>
      <Item arrow>O<u>r</u>der</Item>
      <MenuRule />
      <Item off icon={<MenuIcon><rect x="1" y="5" width="8" height="6" rx="3" fill="none" stroke="#aaa" strokeWidth="1.500" /><rect x="7" y="5" width="8" height="6" rx="3" fill="none" stroke="#aaa" strokeWidth="1.500" /></MenuIcon>}>C<u>r</u>eate Text Box Link</Item>
      <MenuRule />
      <Item off icon={<MenuIcon><circle cx="8" cy="5" r="4.500" fill="none" stroke="#b5b5b5" /><path d="M3.500 5h9M8 .5v9" stroke="#b5b5b5" /><rect x="1" y="9" width="8" height="6" rx="3" fill="#fff" stroke="#aaa" strokeWidth="1.500" /><rect x="7" y="9" width="8" height="6" rx="3" fill="none" stroke="#aaa" strokeWidth="1.500" /></MenuIcon>}>Edit <u>H</u>yperlink...</Item>
      <Item icon={<MenuIcon><path d="M0 9h6l2 2h8v5H0z" fill="#eeb356" /><circle cx="5" cy="4.500" r="4" fill="#fff" stroke="#2f6db5" strokeWidth="1.500" /><path d="M1 4.500h8" stroke="#2f6db5" /><path d="M11 5c0-3 3-3 4-1M15 1v3h-3" fill="none" stroke="#2f6db5" /></MenuIcon>}><u>O</u>pen Hyperlink</Item>
      <Item off icon={<MenuIcon><rect x="1" y="2" width="7" height="5" rx="2.500" fill="none" stroke="#aaa" strokeWidth="1.500" /><rect x="8" y="2" width="7" height="5" rx="2.500" fill="none" stroke="#aaa" strokeWidth="1.500" /><path d="m5 8 7 7M12 8l-7 7" stroke="#aaa" strokeWidth="2" /></MenuIcon>}><u>R</u>emove Hyperlink</Item>
      <MenuRule />
      <Item off>Set AutoShape <u>D</u>efaults</Item>
      <Item off icon={<MenuIcon><path d="M1 6 6 2l5 5-2 4c-3 0-6-2-8-5z" fill="#d5d5d5" stroke="#aaa" /><path d="M15 5 7 13l-3 2 1-4 8-8z" fill="#aaa" /></MenuIcon>}><u>F</u>ormat AutoShape/Picture</Item>
    </Menu>

    <Watermark aria-hidden="true">
      <WatermarkWord $sx={0.6} $w={68}>ANY</WatermarkWord>
      <svg width="66" height="64" viewBox="0 0 66 64" fill="none" stroke="#eeeeee" strokeWidth="3">
        <path d="M8 8v50l55-25zM3 18v32M18 22v22l22-11z" />
      </svg>
      <WatermarkWord $sx={0.53} $w={60}>RUN</WatermarkWord>
    </Watermark>
  </Page>
);

export default App;
